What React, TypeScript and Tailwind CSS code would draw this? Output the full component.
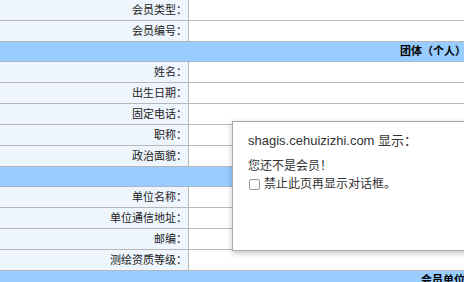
const rows: { label?: string; header?: string; headerPad?: string }[] = [
  { label: '会员类型：' },
  { label: '会员编号：' },
  { header: '团体（个人）', headerPad: 'pl-[400px]' },
  { label: '姓名：' },
  { label: '出生日期：' },
  { label: '固定电话：' },
  { label: '职称：' },
  { label: '政治面貌：' },
  { header: '', headerPad: 'pl-[400px]' },
  { label: '单位名称：' },
  { label: '单位通信地址：' },
  { label: '邮编：' },
  { label: '测绘资质等级：' },
  { header: '会员单位信息', headerPad: 'pl-[421px]' },
];

export default function App() {
  return (
    <div className="relative w-[464px] h-[282px] overflow-hidden bg-white font-['Liberation_Sans','Noto_Sans_CJK_SC',sans-serif] text-[11px] text-[#222]">
      <div className="flex flex-col">
        {rows.map((row, i) =>
          row.header !== undefined ? (
            <div
              key={i}
              className={`h-[20px] shrink-0 flex items-center bg-[#99CCFF] border-b border-[#a9b8c8] whitespace-nowrap font-bold text-[11px] text-black ${row.headerPad}`}
            >
              {row.header}
            </div>
          ) : (
            <div key={i} className="h-[21px] shrink-0 flex border-b border-[#b8b8b8]">
              <div className="w-[189px] shrink-0 bg-[#eef5fd] border-r border-[#b8b8b8] flex items-center justify-end pr-[1px]">
                {row.label}
              </div>
              <div className="flex-1 bg-white" />
            </div>
          )
        )}
      </div>

      <div className="absolute left-[232px] top-[121px] w-[260px] h-[130px] bg-white border border-[#a8a8a8] shadow-[0_2px_6px_rgba(0,0,0,0.25)] pl-[15px] pt-[10px]">
        <div className="text-[13px] leading-[18px] text-[#333]">shagis.cehuizizhi.com 显示：</div>
        <div className="mt-[8px] text-[12px] leading-[16px] text-[#333]">您还不是会员！</div>
        <div className="mt-[2px] flex items-center gap-[4px]">
          <span className="w-[11px] h-[11px] ml-[1px] rounded-[2px] border border-[#9a9a9a] bg-white" />
          <span className="text-[12px] leading-[16px] text-[#333]">禁止此页再显示对话框。</span>
        </div>
      </div>
    </div>
  );
}
